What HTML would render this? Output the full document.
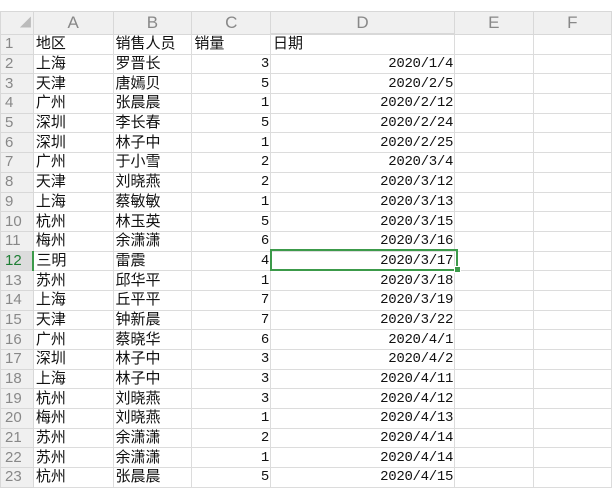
<!DOCTYPE html>
<html><head><meta charset="utf-8"><style>
body{margin:0;width:612px;height:490px;background:#fff;overflow:hidden;position:relative;font-family:"Liberation Sans","Noto Sans CJK SC",sans-serif}
table{position:absolute;left:0;top:11px;border-collapse:collapse;table-layout:fixed}
td{border:1px solid #dcdcdc;height:18.7px;padding:0 2px;font-size:15px;line-height:18px;white-space:nowrap;overflow:hidden;color:#111}
tr:first-child td{height:21px;background:#f0f0f0;color:#888;text-align:center;font-size:17px;border-color:#d8d8d8}
td.h{background:#f0f0f0;color:#888;text-align:left;font-size:15px;padding-left:4px;border-color:#d8d8d8}
td.n{text-align:right;font-family:"Liberation Mono",monospace;font-size:14px;padding-right:1px;letter-spacing:-0.3px}
td.sel{background:#dcdcdc;color:#1e7e34;border-right:2px solid #3c9a4a}
td.dh{background:#e2e2e2;color:#3c9a4a;border-bottom:2px solid #3c9a4a}
.box{position:absolute;left:270px;top:249px;width:184px;height:18px;border:2px solid #3c9a4a}
.dot{position:absolute;left:454px;top:266px;width:5px;height:5px;background:#3c9a4a;border:1px solid #fff}
</style></head><body>
<table>
<colgroup><col style="width:33px"><col style="width:80px"><col style="width:79px"><col style="width:79px"><col style="width:185px"><col style="width:79px"><col style="width:79px"></colgroup>
<tr><td style="color:#bbb;font-size:11px;text-align:right">◢</td><td>A</td><td>B</td><td>C</td><td class="dh">D</td><td>E</td><td>F</td></tr>
<tr><td class="h">1</td><td>地区</td><td>销售人员</td><td>销量</td><td>日期</td><td></td><td></td></tr>
<tr><td class="h">2</td><td>上海</td><td>罗晋长</td><td class="n">3</td><td class="n">2020/1/4</td><td></td><td></td></tr>
<tr><td class="h">3</td><td>天津</td><td>唐嫣贝</td><td class="n">5</td><td class="n">2020/2/5</td><td></td><td></td></tr>
<tr><td class="h">4</td><td>广州</td><td>张晨晨</td><td class="n">1</td><td class="n">2020/2/12</td><td></td><td></td></tr>
<tr><td class="h">5</td><td>深圳</td><td>李长春</td><td class="n">5</td><td class="n">2020/2/24</td><td></td><td></td></tr>
<tr><td class="h">6</td><td>深圳</td><td>林子中</td><td class="n">1</td><td class="n">2020/2/25</td><td></td><td></td></tr>
<tr><td class="h">7</td><td>广州</td><td>于小雪</td><td class="n">2</td><td class="n">2020/3/4</td><td></td><td></td></tr>
<tr><td class="h">8</td><td>天津</td><td>刘晓燕</td><td class="n">2</td><td class="n">2020/3/12</td><td></td><td></td></tr>
<tr><td class="h">9</td><td>上海</td><td>蔡敏敏</td><td class="n">1</td><td class="n">2020/3/13</td><td></td><td></td></tr>
<tr><td class="h">10</td><td>杭州</td><td>林玉英</td><td class="n">5</td><td class="n">2020/3/15</td><td></td><td></td></tr>
<tr><td class="h">11</td><td>梅州</td><td>余潇潇</td><td class="n">6</td><td class="n">2020/3/16</td><td></td><td></td></tr>
<tr><td class="h sel">12</td><td>三明</td><td>雷震</td><td class="n">4</td><td class="n">2020/3/17</td><td></td><td></td></tr>
<tr><td class="h">13</td><td>苏州</td><td>邱华平</td><td class="n">1</td><td class="n">2020/3/18</td><td></td><td></td></tr>
<tr><td class="h">14</td><td>上海</td><td>丘平平</td><td class="n">7</td><td class="n">2020/3/19</td><td></td><td></td></tr>
<tr><td class="h">15</td><td>天津</td><td>钟新晨</td><td class="n">7</td><td class="n">2020/3/22</td><td></td><td></td></tr>
<tr><td class="h">16</td><td>广州</td><td>蔡晓华</td><td class="n">6</td><td class="n">2020/4/1</td><td></td><td></td></tr>
<tr><td class="h">17</td><td>深圳</td><td>林子中</td><td class="n">3</td><td class="n">2020/4/2</td><td></td><td></td></tr>
<tr><td class="h">18</td><td>上海</td><td>林子中</td><td class="n">3</td><td class="n">2020/4/11</td><td></td><td></td></tr>
<tr><td class="h">19</td><td>杭州</td><td>刘晓燕</td><td class="n">3</td><td class="n">2020/4/12</td><td></td><td></td></tr>
<tr><td class="h">20</td><td>梅州</td><td>刘晓燕</td><td class="n">1</td><td class="n">2020/4/13</td><td></td><td></td></tr>
<tr><td class="h">21</td><td>苏州</td><td>余潇潇</td><td class="n">2</td><td class="n">2020/4/14</td><td></td><td></td></tr>
<tr><td class="h">22</td><td>苏州</td><td>余潇潇</td><td class="n">1</td><td class="n">2020/4/14</td><td></td><td></td></tr>
<tr><td class="h">23</td><td>杭州</td><td>张晨晨</td><td class="n">5</td><td class="n">2020/4/15</td><td></td><td></td></tr>
</table>
<div class="box"></div><div class="dot"></div>
</body></html>
